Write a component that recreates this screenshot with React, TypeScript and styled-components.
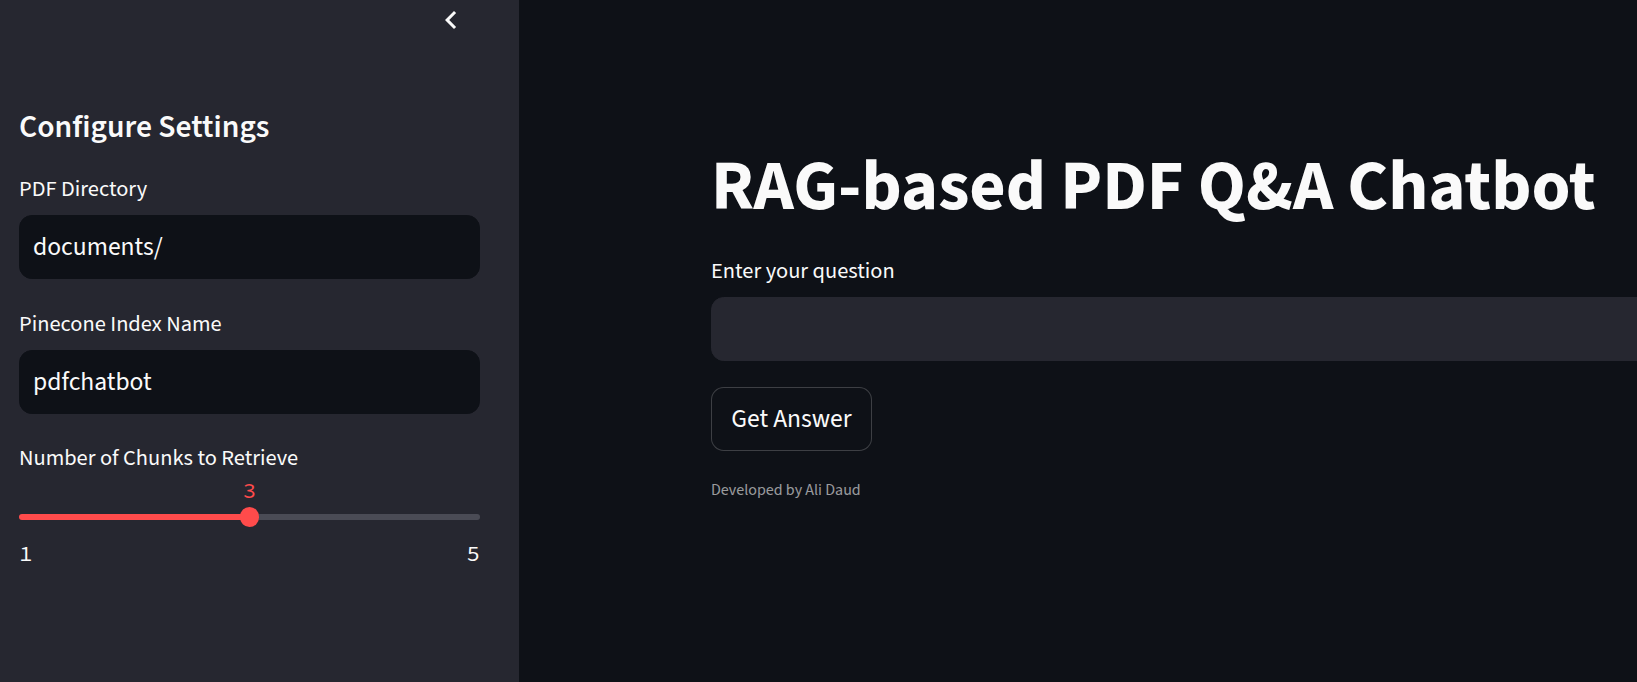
import React from "react";
import styled, { createGlobalStyle } from "styled-components";

const GlobalStyle = createGlobalStyle`
  html, body, #root { height: 100%; }
  body {
    margin: 0;
    background: #0e1117;
    color: #fafafa;
    font-family: "Source Sans 3", "Source Sans Pro", "Lato", sans-serif;
    -webkit-font-smoothing: antialiased;
  }
  * { box-sizing: border-box; }
`;

const Page = styled.div`
  display: flex;
  height: 100vh;
  overflow: hidden;
`;

const Sidebar = styled.aside`
  width: 519px;
  flex-shrink: 0;
  background: #262730;
  display: flex;
  flex-direction: column;
`;

const SidebarHeader = styled.div`
  height: 48px;
  display: flex;
  justify-content: flex-end;
  align-items: flex-start;
  padding: 2px 50px 0 0;
`;

const CollapseButton = styled.button`
  width: 36px;
  height: 36px;
  padding: 0;
  border: none;
  background: none;
  color: #fafafa;
  display: flex;
  cursor: pointer;
`;

const SidebarBody = styled.div`
  display: flex;
  flex-direction: column;
  padding: 0 39px 0 19px;
`;

const SidebarTitle = styled.h2`
  margin: 60.5px 0 0;
  font-size: 31.6px;
  line-height: 38.4px;
  font-weight: 600;
`;

const Field = styled.div<{ $gap: number }>`
  display: flex;
  flex-direction: column;
  margin-top: ${(p) => p.$gap}px;
`;

const Label = styled.label`
  font-size: 22.4px;
  line-height: 35.84px;
  font-weight: 400;
  color: #fafafa;
  margin-bottom: 7.2px;
`;

const TextBox = styled.input<{ $bg: string }>`
  height: 64px;
  width: 100%;
  border-radius: 12.8px;
  border: 1px solid ${(p) => p.$bg};
  background: ${(p) => p.$bg};
  padding: 0 13px;
  font-family: inherit;
  font-size: 25.6px;
  color: #fafafa;
  outline: none;
`;

const SliderWrap = styled.div`
  position: relative;
  margin-top: 23.8px;
`;

const TrackRow = styled.div`
  position: relative;
  height: 19.2px;
  display: flex;
  align-items: center;
`;

const Track = styled.div`
  width: 100%;
  height: 6.4px;
  border-radius: 3.2px;
`;

const Thumb = styled.div`
  position: absolute;
  top: 0;
  width: 19.2px;
  height: 19.2px;
  margin-left: -9.6px;
  border-radius: 50%;
  background: #ff4b4b;
`;

const mono = `"Source Code Pro", "DejaVu Sans Mono", monospace`;

const ThumbValue = styled.div`
  position: absolute;
  bottom: calc(100% + 6px);
  transform: translateX(-50%);
  font-family: ${mono};
  font-size: 22.4px;
  line-height: 22.4px;
  color: #ff4b4b;
`;

const Ticks = styled.div`
  display: flex;
  justify-content: space-between;
  margin-top: 15.7px;
  font-family: ${mono};
  font-size: 22.4px;
  line-height: 22.4px;
  color: #fafafa;
`;

const Main = styled.main`
  flex: 1;
  min-width: 0;
  overflow: hidden;
  padding-left: 192px;
`;

const MainContent = styled.div`
  width: 1104px;
  display: flex;
  flex-direction: column;
`;

const Title = styled.h1`
  margin: 145.1px 0 0;
  font-size: 70.4px;
  line-height: 84.48px;
  font-weight: 700;
  white-space: nowrap;
`;

const Button = styled.button`
  align-self: flex-start;
  margin-top: 25.7px;
  height: 64px;
  padding: 0 19.2px;
  border: 1px solid rgba(250, 250, 250, 0.2);
  border-radius: 12.8px;
  background: #0e1117;
  color: #fafafa;
  font-family: inherit;
  font-size: 25.6px;
  line-height: 40.96px;
  cursor: pointer;
`;

const Caption = styled.p`
  margin: 27.2px 0 0;
  font-size: 16px;
  line-height: 25.6px;
  color: rgba(250, 250, 250, 0.6);
`;

function ChevronLeft() {
  return (
    <svg width="36" height="36" viewBox="0 0 24 24" fill="currentColor">
      <path d="M15.41 7.41L14 6l-6 6 6 6 1.41-1.41L10.83 12z" />
    </svg>
  );
}

function Slider({ min, max, value }: { min: number; max: number; value: number }) {
  const pct = ((value - min) / (max - min)) * 100;
  return (
    <SliderWrap>
      <TrackRow>
        <Track
          style={{
            background: `linear-gradient(to right, #ff4b4b 0 ${pct}%, #4a4b55 ${pct}% 100%)`,
          }}
        />
        <Thumb style={{ left: `${pct}%` }} />
        <ThumbValue style={{ left: `${pct}%` }}>{value}</ThumbValue>
      </TrackRow>
      <Ticks>
        <span>{min}</span>
        <span>{max}</span>
      </Ticks>
    </SliderWrap>
  );
}

export default function App() {
  return (
    <>
      <GlobalStyle />
      <Page>
        <Sidebar>
          <SidebarHeader>
            <CollapseButton aria-label="Collapse sidebar">
              <ChevronLeft />
            </CollapseButton>
          </SidebarHeader>
          <SidebarBody>
            <SidebarTitle>Configure Settings</SidebarTitle>
            <Field $gap={25.5}>
              <Label>PDF Directory</Label>
              <TextBox $bg="#0e1117" defaultValue="documents/" />
            </Field>
            <Field $gap={27.4}>
              <Label>Pinecone Index Name</Label>
              <TextBox $bg="#0e1117" defaultValue="pdfchatbot" />
            </Field>
            <Field $gap={26.8}>
              <Label>Number of Chunks to Retrieve</Label>
              <Slider min={1} max={5} value={3} />
            </Field>
          </SidebarBody>
        </Sidebar>
        <Main>
          <MainContent>
            <Title>RAG-based PDF Q&amp;A Chatbot</Title>
            <Field $gap={24.8}>
              <Label>Enter your question</Label>
              <TextBox $bg="#262730" />
            </Field>
            <Button>Get Answer</Button>
            <Caption>Developed by Ali Daud</Caption>
          </MainContent>
        </Main>
      </Page>
    </>
  );
}
